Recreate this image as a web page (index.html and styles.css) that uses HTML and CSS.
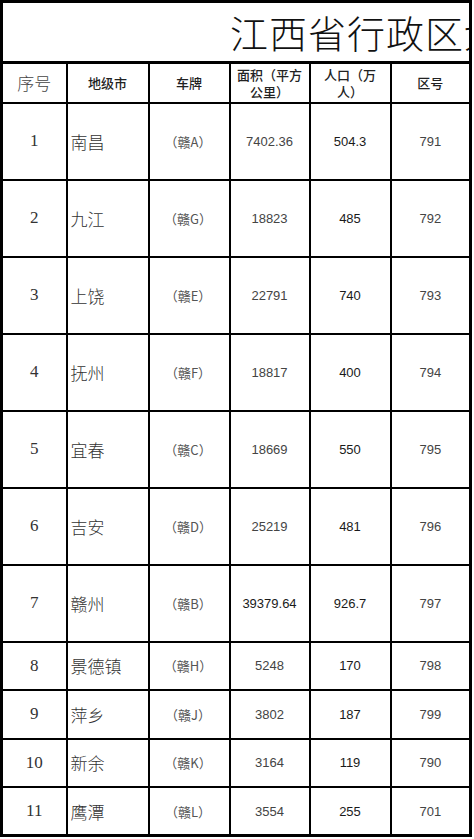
FILE: index.html
```html
<!DOCTYPE html>
<html lang="zh-CN">
<head>
<meta charset="utf-8">
<title>江西省行政区划表</title>
<link rel="stylesheet" href="styles.css">
</head>
<body>
<table class="sheet">
  <colgroup>
    <col class="c-no"><col class="c-city"><col class="c-plate"><col class="c-area"><col class="c-pop"><col class="c-code">
  </colgroup>
  <tr class="r-title"><td colspan="6" class="title"><div class="title-text">江西省行政区划表</div></td></tr>
  <tr class="r-head">
    <th class="h-no">序号</th>
    <th>地级市</th>
    <th>车牌</th>
    <th>面积（平方公里）</th>
    <th>人口（万人）</th>
    <th>区号</th>
  </tr>
  <tr class="r-big"><td class="no">1</td><td class="city">南昌</td><td class="plate"><span class="po">（</span>赣A<span class="pc">）</span></td><td class="num">7402.36</td><td class="num dark">504.3</td><td class="num">791</td></tr>
  <tr class="r-big"><td class="no">2</td><td class="city">九江</td><td class="plate"><span class="po">（</span>赣G<span class="pc">）</span></td><td class="num">18823</td><td class="num dark">485</td><td class="num">792</td></tr>
  <tr class="r-big"><td class="no">3</td><td class="city">上饶</td><td class="plate"><span class="po">（</span>赣E<span class="pc">）</span></td><td class="num">22791</td><td class="num dark">740</td><td class="num">793</td></tr>
  <tr class="r-big"><td class="no">4</td><td class="city">抚州</td><td class="plate"><span class="po">（</span>赣F<span class="pc">）</span></td><td class="num">18817</td><td class="num dark">400</td><td class="num">794</td></tr>
  <tr class="r-big"><td class="no">5</td><td class="city">宜春</td><td class="plate"><span class="po">（</span>赣C<span class="pc">）</span></td><td class="num">18669</td><td class="num dark">550</td><td class="num">795</td></tr>
  <tr class="r-big"><td class="no">6</td><td class="city">吉安</td><td class="plate"><span class="po">（</span>赣D<span class="pc">）</span></td><td class="num">25219</td><td class="num dark">481</td><td class="num">796</td></tr>
  <tr class="r-big"><td class="no">7</td><td class="city">赣州</td><td class="plate"><span class="po">（</span>赣B<span class="pc">）</span></td><td class="num dark">39379.64</td><td class="num dark">926.7</td><td class="num">797</td></tr>
  <tr class="r-small"><td class="no">8</td><td class="city">景德镇</td><td class="plate"><span class="po">（</span>赣H<span class="pc">）</span></td><td class="num">5248</td><td class="num dark">170</td><td class="num">798</td></tr>
  <tr class="r-small"><td class="no">9</td><td class="city">萍乡</td><td class="plate"><span class="po">（</span>赣J<span class="pc">）</span></td><td class="num">3802</td><td class="num dark">187</td><td class="num">799</td></tr>
  <tr class="r-small"><td class="no">10</td><td class="city">新余</td><td class="plate"><span class="po">（</span>赣K<span class="pc">）</span></td><td class="num">3164</td><td class="num dark">119</td><td class="num">790</td></tr>
  <tr class="r-small"><td class="no">11</td><td class="city">鹰潭</td><td class="plate"><span class="po">（</span>赣L<span class="pc">）</span></td><td class="num">3554</td><td class="num dark">255</td><td class="num">701</td></tr>
</table>
</body>
</html>
```
FILE: styles.css
```css
html, body {
  margin: 0;
  padding: 0;
  background: #fff;
}
body {
  font-family: "Noto Sans CJK SC", "Liberation Sans", sans-serif;
  color: #333;
}
.sheet {
  border-collapse: collapse;
  table-layout: fixed;
  width: 469px;
  border: 3px solid #000;
}
.c-no { width: 65px; }
.c-city { width: 82px; }
.c-plate { width: 81px; }
.c-area { width: 80px; }
.c-pop { width: 81px; }
.c-code { width: 80px; }

.sheet td, .sheet th {
  border: 2px solid #000;
  padding: 0 4px;
  text-align: center;
  vertical-align: middle;
}
.r-title { height: 61px; }
.r-head { height: 40px; }
.r-big { height: 77px; }
.r-small { height: 48.5px; }

.sheet td.title {
  padding: 0;
  border-bottom: 3px solid #000;
  overflow: hidden;
}
.title-text {
  white-space: nowrap;
  overflow: hidden;
  text-align: left;
  padding-left: 227px;
  font-size: 38px;
  font-weight: 300;
  line-height: 44px;
  color: #111;
  letter-spacing: 1px;
}
.sheet th {
  font-size: 13px;
  font-weight: 500;
  line-height: 17px;
  color: #222;
}
.sheet th.h-no {
  font-size: 17px;
  font-weight: 300;
  color: #444;
}
.no {
  font-family: "Liberation Serif", "DejaVu Serif", serif;
  font-size: 17px;
  color: #333;
}
.sheet td.city {
  text-align: left;
  padding-left: 3px;
  font-size: 17px;
  font-weight: 300;
  color: #333;
}
.sheet td.plate {
  font-size: 13px;
  color: #555;
  padding: 0 2px 0 0;
  white-space: nowrap;
}
.po, .pc {
  display: inline-block;
  width: 13px;
}
.num {
  font-family: "Liberation Sans", Arial, sans-serif;
  font-size: 13px;
  color: #444;
}
.num.dark {
  color: #1a1a1a;
}
```
